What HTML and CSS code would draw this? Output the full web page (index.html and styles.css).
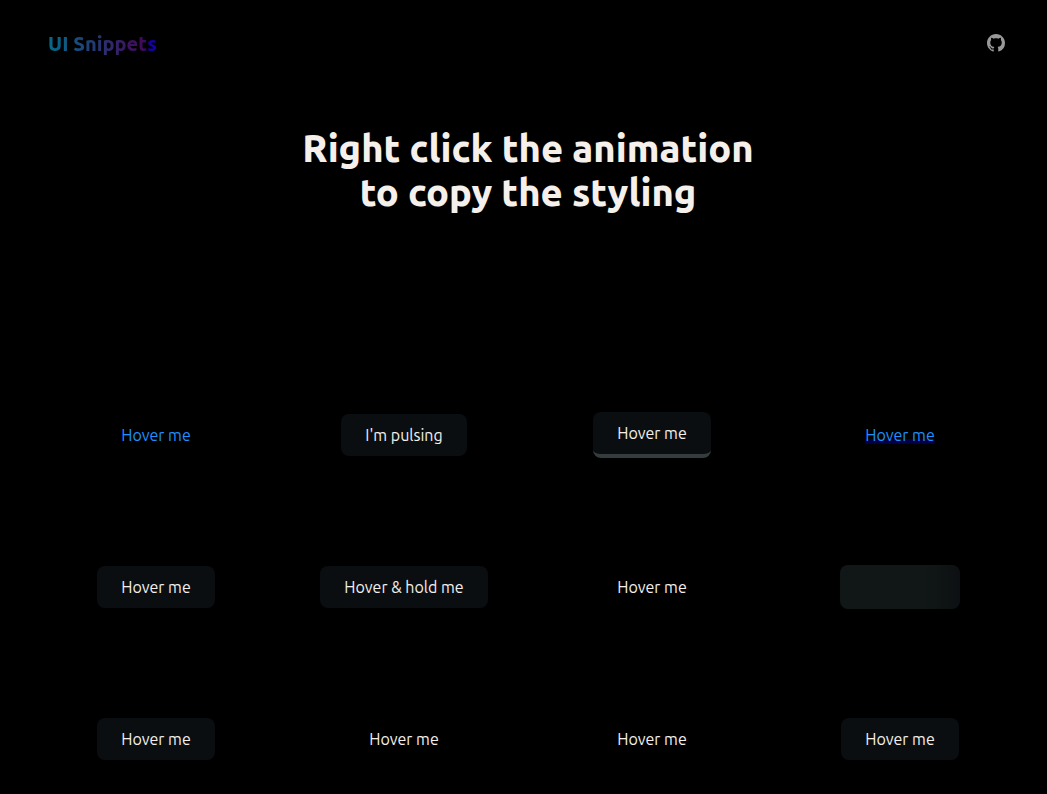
FILE: index.html
```html
<!DOCTYPE html>
<html lang="en">
<head>
<meta charset="utf-8">
<meta name="viewport" content="width=device-width, initial-scale=1">
<title>UI Snippets</title>
<link rel="stylesheet" href="styles.css">
</head>
<body>
<header class="header">
  <a class="logo" href="#">UI Snippets</a>
  <a class="github" href="#" aria-label="GitHub">
    <svg viewBox="0 0 16 16" width="18" height="18" fill="currentColor" aria-hidden="true"><path d="M8 0C3.58 0 0 3.58 0 8c0 3.54 2.29 6.53 5.47 7.59.4.07.55-.17.55-.38 0-.19-.01-.82-.01-1.49-2.01.37-2.53-.49-2.69-.94-.09-.23-.48-.94-.82-1.13-.28-.15-.68-.52-.01-.53.63-.01 1.08.58 1.23.82.72 1.21 1.87.87 2.33.66.07-.52.28-.87.51-1.07-1.78-.2-3.64-.89-3.64-3.95 0-.87.31-1.59.82-2.15-.08-.2-.36-1.02.08-2.12 0 0 .67-.21 2.2.82.64-.18 1.32-.27 2-.27s1.36.09 2 .27c1.53-1.04 2.2-.82 2.2-.82.44 1.1.16 1.92.08 2.12.51.56.82 1.27.82 2.15 0 3.07-1.87 3.75-3.65 3.95.29.25.54.73.54 1.48 0 1.07-.01 1.93-.01 2.2 0 .21.15.46.55.38A8.01 8.01 0 0 0 16 8c0-4.42-3.58-8-8-8z"/></svg>
  </a>
</header>
<main>
  <h1 class="title">Right click the animation<br>to copy the styling</h1>
  <div class="grid">
    <div class="cell"><a class="link" href="#">Hover me</a></div>
    <div class="cell"><button class="button">I'm pulsing</button></div>
    <div class="cell"><button class="button raised">Hover me</button></div>
    <div class="cell"><a class="link marked" href="#">Hover me</a></div>
    <div class="cell"><button class="button">Hover me</button></div>
    <div class="cell"><button class="button">Hover &amp; hold me</button></div>
    <div class="cell"><button class="button plain">Hover me</button></div>
    <div class="cell"><div class="skeleton"></div></div>
    <div class="cell"><button class="button">Hover me</button></div>
    <div class="cell"><button class="button plain">Hover me</button></div>
    <div class="cell"><button class="button plain">Hover me</button></div>
    <div class="cell"><button class="button">Hover me</button></div>
  </div>
</main>
</body>
</html>
```
FILE: styles.css
```css
* {
  box-sizing: border-box;
}

body {
  margin: 0;
  padding: 0 23px 0 32px;
  background: #000;
  color: #f5f0eb;
  font-family: Ubuntu, "Noto Sans", sans-serif;
  font-size: 16px;
  line-height: 24px;
}

.header {
  display: flex;
  align-items: center;
  justify-content: space-between;
  height: 86px;
  padding: 0 19px 0 16px;
}

.logo {
  padding-top: 2px;
  font-size: 20px;
  line-height: 26px;
  font-weight: 800;
  text-decoration: none;
  color: transparent;
  background: linear-gradient(90deg, #046b8c, #3c1460 75%, #400a58 88%, #1500a0 92%);
  background-clip: text;
  -webkit-background-clip: text;
}

.github {
  display: flex;
  color: #999;
}

.title {
  margin: 40px 0 0;
  font-size: 38px;
  line-height: 44px;
  font-weight: 800;
  text-align: center;
}

.grid {
  display: grid;
  grid-template-columns: repeat(4, 1fr);
  grid-auto-rows: 152px;
  margin-top: 145px;
}

.cell {
  display: flex;
  align-items: center;
  justify-content: center;
}

.button {
  min-height: 42px;
  padding: 9px 24px;
  border: 0;
  border-radius: 8px;
  background: #0a0e11;
  color: inherit;
  font: inherit;
  cursor: pointer;
}

.raised {
  border-bottom: 4px solid #343c3e;
}

.plain {
  background: transparent;
}

.link {
  color: #1e90ff;
  text-decoration: none;
}

.marked {
  line-height: 18px;
  background: linear-gradient(#000048, #000048) bottom / 100% 5px no-repeat;
}

.skeleton {
  width: 120px;
  height: 44px;
  border-radius: 8px;
  background: linear-gradient(90deg, #111716 70%, #0d1012);
}
```
